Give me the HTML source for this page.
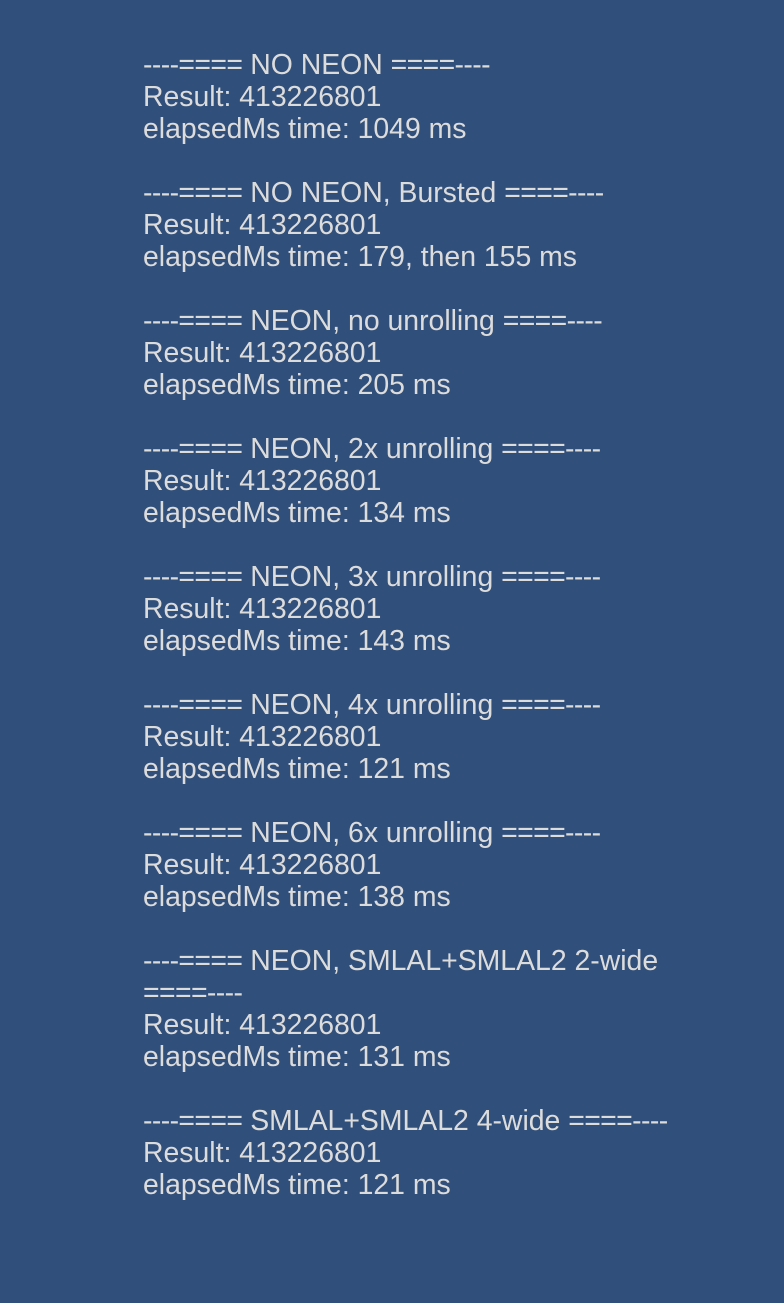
<!DOCTYPE html>
<html><head><style>
html,body{margin:0;padding:0;background:#314f7b;width:784px;height:1303px;overflow:hidden}
pre{margin:0;position:absolute;left:143px;top:49px;font-family:"Liberation Sans",sans-serif;font-size:28.4px;line-height:32px;color:#dcdcdc;white-space:pre}
i{font-style:normal;letter-spacing:-0.6px}
</style></head><body>
<pre><i>----====</i> NO NEON <i>====----</i>
Result: 413226801
elapsedMs time: 1049 ms

<i>----====</i> NO NEON, Bursted <i>====----</i>
Result: 413226801
elapsedMs time: 179, then 155 ms

<i>----====</i> NEON, no unrolling <i>====----</i>
Result: 413226801
elapsedMs time: 205 ms

<i>----====</i> NEON, 2x unrolling <i>====----</i>
Result: 413226801
elapsedMs time: 134 ms

<i>----====</i> NEON, 3x unrolling <i>====----</i>
Result: 413226801
elapsedMs time: 143 ms

<i>----====</i> NEON, 4x unrolling <i>====----</i>
Result: 413226801
elapsedMs time: 121 ms

<i>----====</i> NEON, 6x unrolling <i>====----</i>
Result: 413226801
elapsedMs time: 138 ms

<i>----====</i> NEON, SMLAL+SMLAL2 2-wide
<i>====----</i>
Result: 413226801
elapsedMs time: 131 ms

<i>----====</i> SMLAL+SMLAL2 4-wide <i>====----</i>
Result: 413226801
elapsedMs time: 121 ms</pre>
</body></html>
